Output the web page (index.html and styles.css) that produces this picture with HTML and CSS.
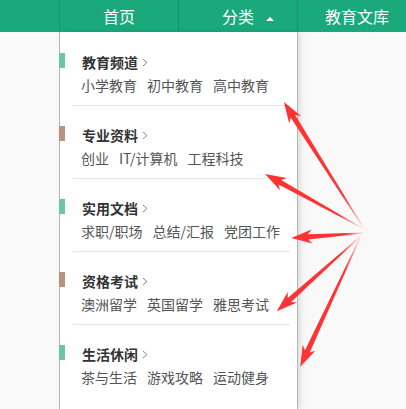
FILE: index.html
```html
<!DOCTYPE html>
<html>
<head>
    <title>分类导航</title>
    <meta charset="utf-8">
    <meta name="viewport" content="width=device-width, initial-scale=1.0">
    <link rel="stylesheet" href="styles.css">
</head>
<body>
    <div class="nav">
        <div class="nav-item">首页</div>
        <div class="nav-item"><span class="nav-label nav-open">分类</span></div>
        <div class="nav-item">教育文库</div>
    </div>

    <div class="menu">
        <div class="group">
            <div class="group-title mark-green">教育频道<svg class="chev" width="6" height="9" viewBox="0 0 6 9"><path d="M1 1l4 3.5L1 8"/></svg></div>
            <div class="group-links"><span>小学教育</span><span>初中教育</span><span>高中教育</span></div>
        </div>
        <div class="group">
            <div class="group-title mark-brown">专业资料<svg class="chev" width="6" height="9" viewBox="0 0 6 9"><path d="M1 1l4 3.5L1 8"/></svg></div>
            <div class="group-links"><span>创业</span><span>IT/计算机</span><span>工程科技</span></div>
        </div>
        <div class="group">
            <div class="group-title mark-green">实用文档<svg class="chev" width="6" height="9" viewBox="0 0 6 9"><path d="M1 1l4 3.5L1 8"/></svg></div>
            <div class="group-links"><span>求职/职场</span><span>总结/汇报</span><span>党团工作</span></div>
        </div>
        <div class="group">
            <div class="group-title mark-brown">资格考试<svg class="chev" width="6" height="9" viewBox="0 0 6 9"><path d="M1 1l4 3.5L1 8"/></svg></div>
            <div class="group-links"><span>澳洲留学</span><span>英国留学</span><span>雅思考试</span></div>
        </div>
        <div class="group group-last">
            <div class="group-title mark-green">生活休闲<svg class="chev" width="6" height="9" viewBox="0 0 6 9"><path d="M1 1l4 3.5L1 8"/></svg></div>
            <div class="group-links"><span>茶与生活</span><span>游戏攻略</span><span>运动健身</span></div>
        </div>
    </div>

    <!-- annotation arrows drawn over the page -->
    <svg class="arrows" width="406" height="409" viewBox="0 0 406 409">
        <defs>
            <linearGradient id="fade" x1="0" y1="0" x2="1" y2="0">
                <stop offset="0" stop-color="#ff3333" stop-opacity="0.15"/>
                <stop offset="0.25" stop-color="#ff3333" stop-opacity="1"/>
            </linearGradient>
        </defs>
        <polygon transform="translate(363 227) rotate(-122.3)" points="0,-0.4 131,-2.6 127,-7 148,0 127,7 131,2.6 0,0.4"/>
        <polygon transform="translate(362 228) rotate(-150.9)" points="0,-0.4 94,-2.6 90,-7 111,0 90,7 94,2.6 0,0.4"/>
        <polygon transform="translate(363 233) rotate(176)" points="0,-0.4 55,-2.6 51,-7 72,0 51,7 55,2.6 0,0.4"/>
        <polygon transform="translate(361 236) rotate(138.2)" points="0,-0.4 96,-2.6 92,-7 113,0 92,7 96,2.6 0,0.4"/>
        <polygon transform="translate(360 238) rotate(114.9)" points="0,-0.4 125,-2.6 121,-7 142,0 121,7 125,2.6 0,0.4"/>
    </svg>
</body>
</html>
```

FILE: styles.css
```css
html, body {
    margin: 0;
    padding: 0;
    height: 100%;
    overflow: hidden;
}

body {
    display: flex;
    flex-direction: column;
    background: #f9f9f9;
    font-family: "Noto Sans CJK SC", "Noto Sans", sans-serif;
}

.nav {
    display: flex;
    height: 32px;
    padding-left: 59px;
    background: #1aa97b;
    color: #fff;
    font-size: 16px;
    line-height: 32px;
    overflow: hidden;
}

.nav-item {
    flex: 0 0 118px;
    border-left: 1px solid #14986c;
    text-align: center;
}

.nav-label {
    position: relative;
}

.nav-open::after {
    content: "";
    position: absolute;
    left: calc(100% + 12px);
    top: 13px;
    border-left: 4px solid transparent;
    border-right: 4px solid transparent;
    border-bottom: 4px solid #fff;
}

.menu {
    flex: 1;
    width: 237px;
    margin-left: 59px;
    padding-top: 1px;
    background: #fff;
    border-left: 1px solid #b4b4b4;
    border-right: 1px solid #b4b4b4;
    box-shadow: 3px 0 5px rgba(0, 0, 0, 0.1);
}

.group {
    margin: 0 7px 0 13px;
    padding: 19px 0 10px;
    border-bottom: 1px solid #e6e6e6;
}

.group-last {
    border-bottom: none;
}

.group-title {
    position: relative;
    display: flex;
    align-items: center;
    padding-left: 9px;
    height: 20px;
    font-size: 14px;
    font-weight: bold;
    color: #333;
}

.group-title::before {
    content: "";
    position: absolute;
    left: -14px;
    top: 1px;
    width: 6px;
    height: 15px;
}

.mark-green::before {
    background: #6cc5a5;
}

.mark-brown::before {
    background: #b8947f;
}

.chev {
    margin-left: 4px;
    fill: none;
    stroke: #888;
    stroke-width: 1;
}

.group-links {
    display: flex;
    gap: 10px;
    margin-top: 3px;
    padding-left: 8px;
    height: 20px;
    line-height: 20px;
    font-size: 14px;
    color: #555;
}

.arrows {
    position: absolute;
    top: 0;
    left: 0;
    pointer-events: none;
}

.arrows polygon {
    fill: url(#fade);
}
```
